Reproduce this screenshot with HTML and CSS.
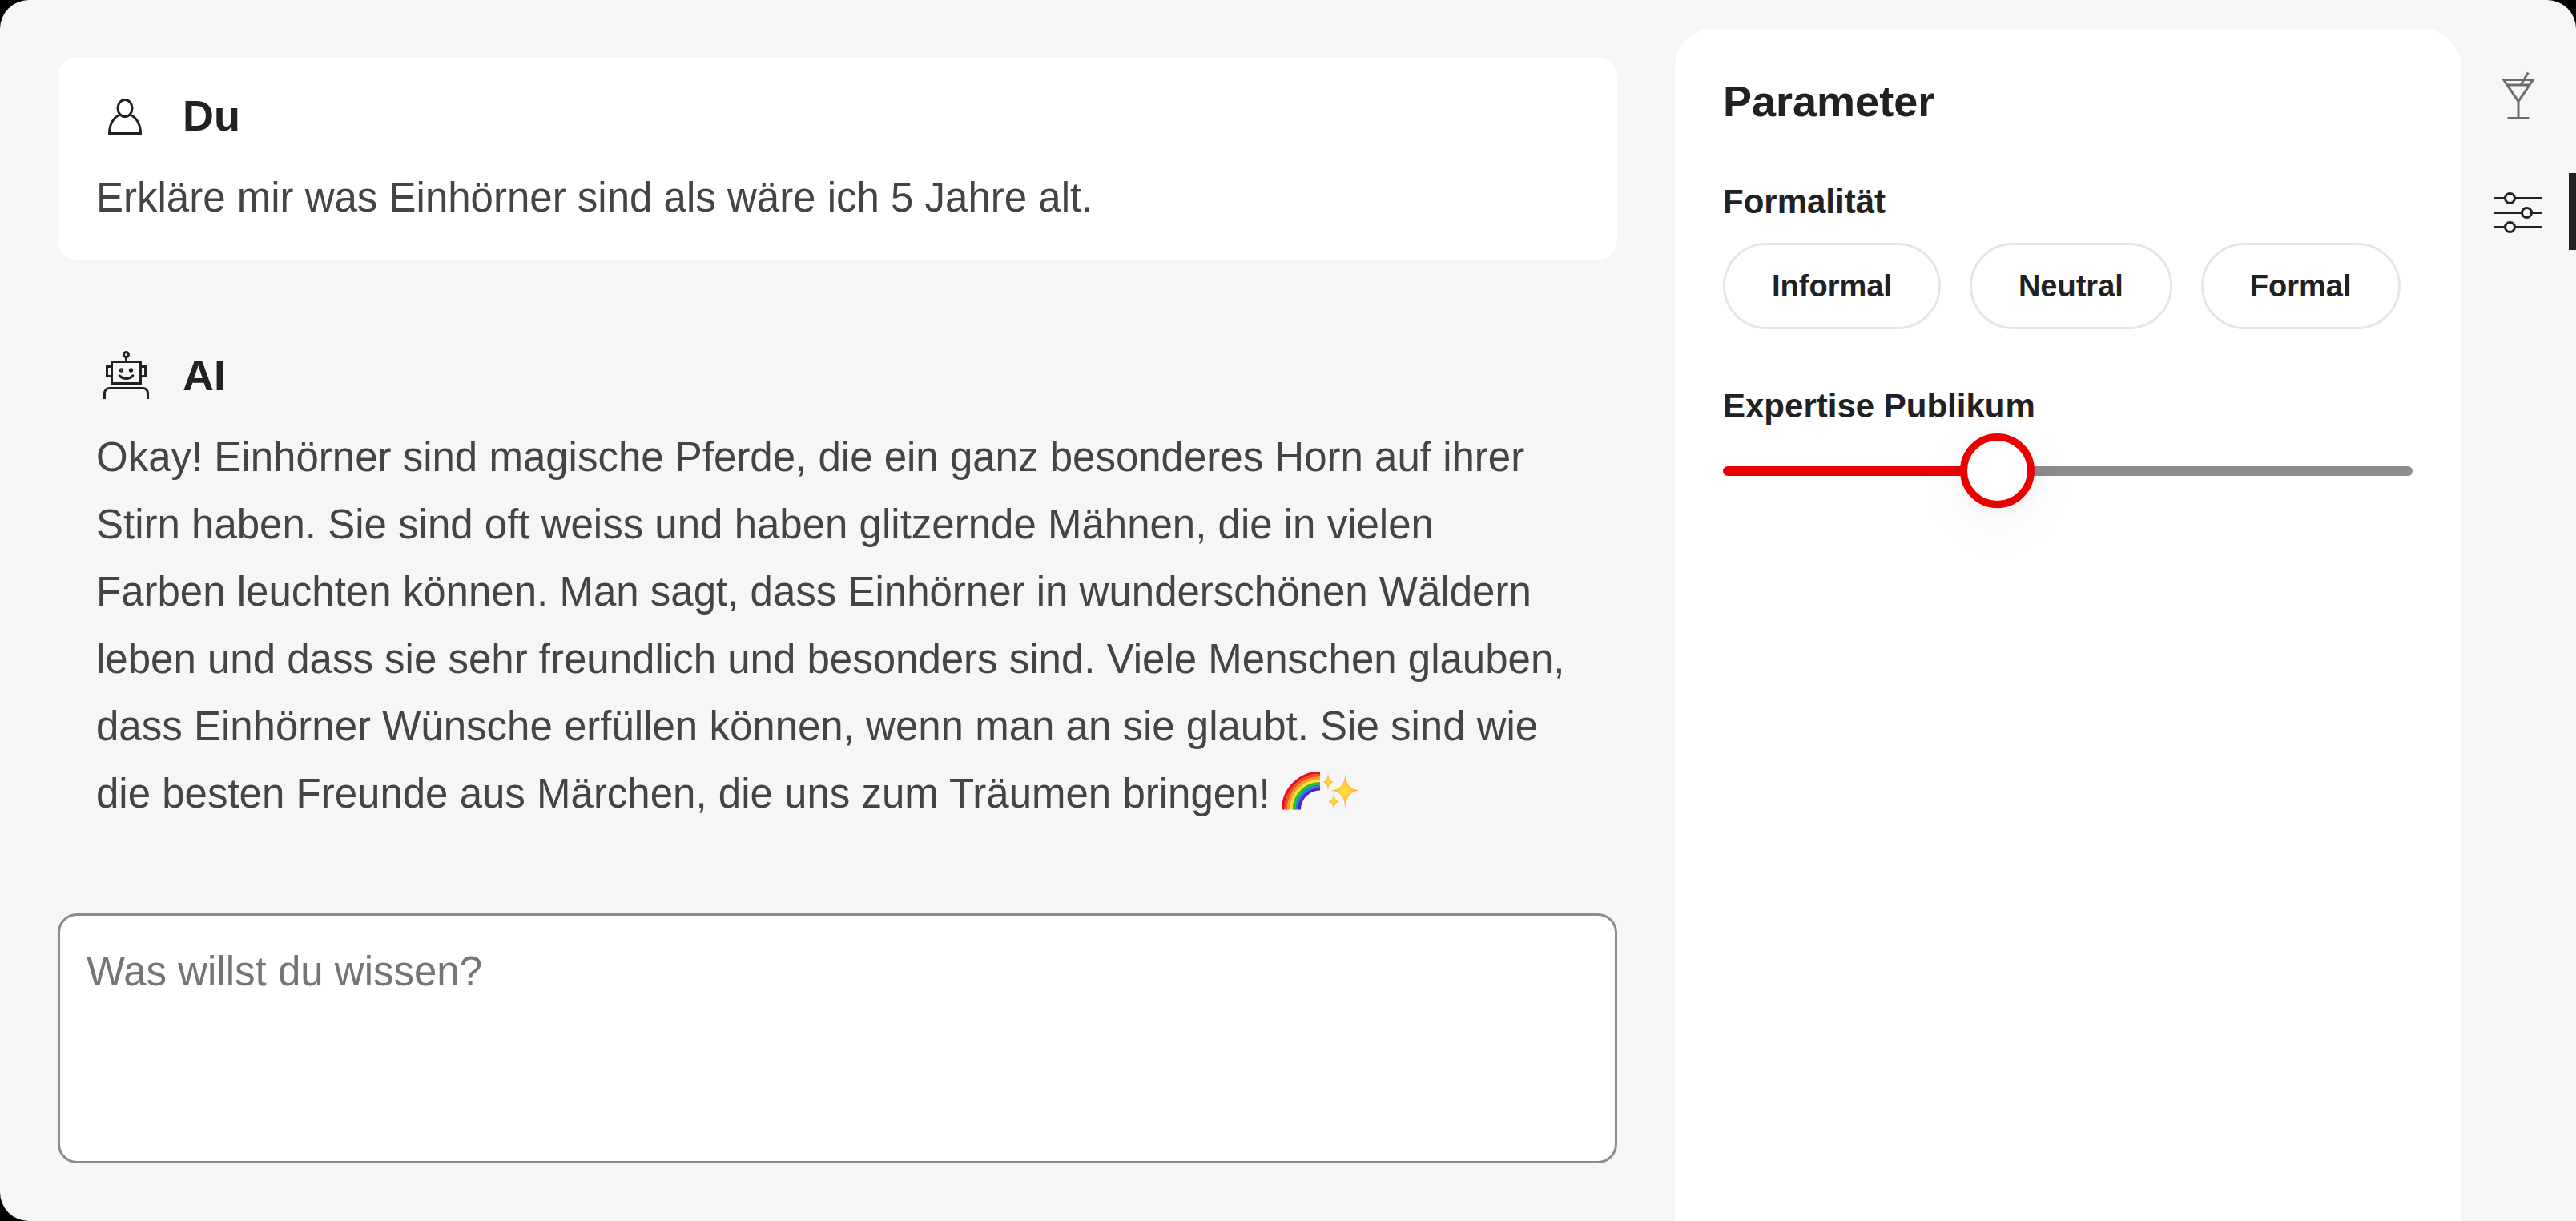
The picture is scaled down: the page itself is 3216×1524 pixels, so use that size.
FILE: index.html
```html
<!DOCTYPE html>
<html lang="de">
<head>
  <meta charset="utf-8">
  <title>Chat</title>
  <link rel="stylesheet" href="styles.css">
</head>
<body>
  <div class="app">
    <main class="chat">
      <article class="message message-user">
        <header class="message-head">
          <svg class="icon" viewBox="0 0 24 24" aria-hidden="true">
            <ellipse cx="12" cy="9" rx="3" ry="3.5"/>
            <path d="M9.900 11.800C7.300 12.600 5.500 15.800 5.500 19.500h13c0-3.700-1.800-6.900-4.400-7.700"/>
          </svg>
          <h2 class="title">Du</h2>
        </header>
        <p class="message-text">Erkläre mir was Einhörner sind als wäre ich 5 Jahre alt.</p>
      </article>

      <article class="message">
        <header class="message-head">
          <svg class="icon" viewBox="0 0 24 24" aria-hidden="true">
            <circle cx="12.500" cy="3.500" r="1"/>
            <path d="M12.500 4.500v2M6.500 6.500h12v9h-12zM6.500 8.500h-2v4h2M18.500 8.500h2v4h-2M3.500 22v-2.500a2 2 0 0 1 2-2h14a2 2 0 0 1 2 2V22"/>
            <g class="icon-fine"><circle cx="10.500" cy="10" r=".55"/><circle cx="14.500" cy="10" r=".55"/></g>
            <path class="icon-round" d="M9.700 12.300c1.600 1.600 4 1.600 5.600 0"/>
          </svg>
          <h2 class="title">AI</h2>
        </header>
        <p class="message-text">Okay! Einhörner sind magische Pferde, die ein ganz besonderes Horn auf ihrer<br>
          Stirn haben. Sie sind oft weiss und haben glitzernde Mähnen, die in vielen<br>
          Farben leuchten können. Man sagt, dass Einhörner in wunderschönen Wäldern<br>
          leben und dass sie sehr freundlich und besonders sind. Viele Menschen glauben,<br>
          dass Einhörner Wünsche erfüllen können, wenn man an sie glaubt. Sie sind wie<br>
          die besten Freunde aus Märchen, die uns zum Träumen bringen!
          <svg class="emoji" viewBox="0 0 100 48" role="img" aria-label="Regenbogen und Funkeln">
            <defs>
              <radialGradient id="star"><stop offset="0" stop-color="#ffe03a"/><stop offset=".5" stop-color="#fcc640"/><stop offset="1" stop-color="#f5a05a"/></radialGradient>
            </defs>
            <g fill="none" stroke-width="3.600">
              <path stroke="#e3122b" d="M1.800 47.500A46.200 46.200 0 0 1 48 1.300"/>
              <path stroke="#f6501c" d="M5.200 47.500A42.800 42.800 0 0 1 48 4.700"/>
              <path stroke="#fb9a1b" d="M8.600 47.500A39.400 39.400 0 0 1 48 8.100"/>
              <path stroke="#fddf3c" d="M12 47.500A36 36 0 0 1 48 11.500"/>
              <path stroke="#2ebd22" d="M15.400 47.500A32.600 32.600 0 0 1 48 14.900"/>
              <path stroke="#1685e0" d="M18.800 47.500A29.200 29.200 0 0 1 48 18.300"/>
              <path stroke="#5a1fc4" d="M22.200 47.500A25.800 25.800 0 0 1 48 21.700"/>
            </g>
            <g fill="url(#star)">
              <path d="M79.500 3Q81 22 97 23.500Q81 25 79.500 46Q78 25 62 23.500Q78 22 79.500 3z"/>
              <path d="M58 2.500Q59 11.500 65 13Q59 14.500 58 23Q57 14.500 51.500 13Q57 11.500 58 2.500z"/>
              <path d="M65 27.500Q66 36 72 37.500Q66 39 65 47Q64 39 58.500 37.500Q64 36 65 27.500z"/>
            </g>
          </svg></p>
      </article>

      <textarea class="prompt" aria-label="Frage" placeholder="Was willst du wissen?"></textarea>
    </main>

    <aside class="panel">
      <h2 class="title">Parameter</h2>
      <section class="field" aria-labelledby="formality">
        <h3 class="label" id="formality">Formalität</h3>
        <div class="chips">
          <button class="chip" type="button">Informal</button>
          <button class="chip" type="button">Neutral</button>
          <button class="chip" type="button">Formal</button>
        </div>
      </section>
      <section class="field field-range">
        <label class="label" for="expertise">Expertise Publikum</label>
        <input class="range" id="expertise" type="range" min="0" max="100" step="0.5" value="38.5">
      </section>
    </aside>

    <nav class="rail">
      <button class="rail-item" type="button" aria-label="Vorlagen">
        <svg class="icon" viewBox="0 0 24 24" aria-hidden="true">
          <path d="M5.900 5.200h12.200L12 14.200zM7.200 7.300h9.600M12 14v7.200M7.500 21.200h9M16.100 2.200l-3 5"/>
        </svg>
      </button>
      <button class="rail-item rail-item-active" type="button" aria-label="Parameter">
        <svg class="icon" viewBox="0 0 24 24" aria-hidden="true">
          <path d="M2 6.500h4.500M10.500 6.500H22M2 12.500h11.500M17.500 12.500H22M2 18.500h4.500M10.500 18.500H22"/>
          <circle cx="8.500" cy="6.500" r="2"/><circle cx="15.500" cy="12.500" r="2"/><circle cx="8.500" cy="18.500" r="2"/>
        </svg>
      </button>
    </nav>
  </div>
</body>
</html>
```
FILE: styles.css
```css
* {
  box-sizing: border-box;
}

body {
  margin: 0;
  background: #000;
  color: #212121;
  font-family: "Liberation Sans", Arial, sans-serif;
}

h2,
h3,
p {
  margin: 0;
}

button {
  font: inherit;
  color: inherit;
  cursor: pointer;
}

.app {
  display: grid;
  grid-template-columns: minmax(0, 1fr) 981px 144px;
  min-height: 100vh;
  background: #f6f6f6;
  border-radius: 36px 36px 0 36px;
}

.title {
  font-size: 54px;
  line-height: 72px;
}

.icon {
  display: block;
  width: 72px;
  height: 72px;
  fill: none;
  stroke: currentColor;
  stroke-width: 1;
}

.icon-fine {
  stroke-width: 0.7;
}

.icon-round {
  stroke-linecap: round;
}

/* Conversation */

.chat {
  display: flex;
  flex-direction: column;
  gap: 72px;
  padding: 72px;
}

.message {
  display: flex;
  flex-direction: column;
  gap: 25px;
  padding: 36px 48px 35px;
  border-radius: 24px;
}

.message-user {
  background: #fff;
}

.message-head {
  display: flex;
  align-items: center;
  gap: 36px;
}

.message-text {
  color: #444;
  font-size: 51px;
  line-height: 84px;
}

.emoji {
  width: 100px;
  height: 48px;
  vertical-align: -3px;
}

.prompt {
  display: block;
  flex: 1;
  width: 100%;
  min-height: 312px;
  padding: 28px 33px;
  border: 3px solid #8c8c8c;
  border-radius: 24px;
  background: #fff;
  color: #444;
  font-family: inherit;
  font-size: 51px;
  line-height: 84px;
  resize: none;
}

.prompt::placeholder {
  color: #757575;
}

/* Parameter panel */

.panel {
  margin-top: 36px;
  padding: 54px 60px;
  border-radius: 48px 48px 0 0;
  background: #fff;
}

.field {
  display: flex;
  flex-direction: column;
  gap: 21px;
  margin-top: 60px;
}

.field-range {
  gap: 4px;
  margin-top: 66px;
}

.label {
  font-size: 42px;
  font-weight: bold;
  line-height: 60px;
}

.chips {
  display: flex;
  gap: 36px;
}

.chip {
  height: 108px;
  padding: 0 58px;
  border: 3px solid #e6e6e6;
  border-radius: 54px;
  background: #fff;
  font-size: 38px;
  font-weight: bold;
}

.range {
  width: 100%;
  height: 93px;
  margin: 0;
  appearance: none;
  background: none;
}

.range::-webkit-slider-runnable-track {
  height: 12px;
  border-radius: 6px;
  background: linear-gradient(90deg, #eb0000 40%, #8c8c8c 40%);
}

.range::-webkit-slider-thumb {
  width: 93px;
  height: 93px;
  margin-top: -41px;
  appearance: none;
  border: 9px solid #eb0000;
  border-radius: 50%;
  background: #fff;
  box-shadow: 0 3px 24px rgba(0, 0, 0, 0.04), 0 18px 72px rgba(0, 0, 0, 0.05);
}

/* Tool rail */

.rail {
  display: flex;
  flex-direction: column;
  gap: 48px;
  padding-top: 72px;
}

.rail-item {
  display: flex;
  align-items: center;
  justify-content: center;
  height: 96px;
  padding: 0;
  border: 0;
  background: none;
  color: #6b6b6b;
}

.rail-item-active {
  color: #212121;
  box-shadow: inset -9px 0 #212121;
}
```
